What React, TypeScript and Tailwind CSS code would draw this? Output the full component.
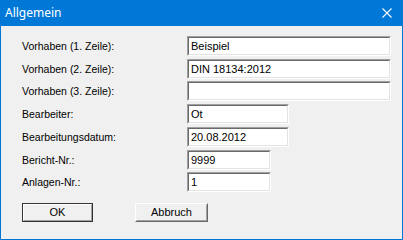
const rows = [
  { label: "Vorhaben (1. Zeile):", value: "Beispiel", width: "w-[204px]", gap: "mt-0" },
  { label: "Vorhaben (2. Zeile):", value: "DIN 18134:2012", width: "w-[204px]", gap: "mt-[3px]" },
  { label: "Vorhaben (3. Zeile):", value: "", width: "w-[204px]", gap: "mt-[2px]" },
  { label: "Bearbeiter:", value: "Ot", width: "w-[102px]", gap: "mt-[3px]" },
  { label: "Bearbeitungsdatum:", value: "20.08.2012", width: "w-[102px]", gap: "mt-[3px]" },
  { label: "Bericht-Nr.:", value: "9999", width: "w-[84px]", gap: "mt-[3px]" },
  { label: "Anlagen-Nr.:", value: "1", width: "w-[84px]", gap: "mt-[2px]" },
];

const uiFont = "font-['Liberation_Sans',Arial,sans-serif]";

function Field({ value, width }: { value: string; width: string }) {
  // klassisches "eingesunkenes" Eingabefeld
  return (
    <div className={`${width} h-[20px] border border-t-[#a0a0a0] border-l-[#a0a0a0] border-b-white border-r-white`}>
      <div className="h-full border border-t-[#696969] border-l-[#696969] border-b-[#e3e3e3] border-r-[#e3e3e3] bg-white flex items-center pl-[2px]">
        <span className={`${uiFont} text-[11px] leading-none text-black`}>{value}</span>
      </div>
    </div>
  );
}

function Button({ label, primary, width }: { label: string; primary?: boolean; width: string }) {
  if (primary) {
    return (
      <div className={`${width} h-[19px] border border-[#333333]`}>
        <div className="h-full border border-t-white border-l-white border-b-[#a0a0a0] border-r-[#a0a0a0] bg-[#f0f0f0] flex items-center justify-center">
          <span className={`${uiFont} text-[11px] leading-none text-black`}>{label}</span>
        </div>
      </div>
    );
  }
  return (
    <div className={`${width} h-[19px] border border-t-white border-l-white border-b-[#696969] border-r-[#696969]`}>
      <div className="h-full border border-t-[#f0f0f0] border-l-[#f0f0f0] border-b-[#a0a0a0] border-r-[#a0a0a0] bg-[#f0f0f0] flex items-center justify-center">
        <span className={`${uiFont} text-[11px] leading-none text-black`}>{label}</span>
      </div>
    </div>
  );
}

export default function App() {
  return (
    <div className="w-[403px] h-[240px] bg-[#0078d7] flex flex-col overflow-hidden">
      {/* Titelleiste */}
      <div className="h-[26px] flex items-center justify-between pl-[5px] pr-[11px] shrink-0">
        <span className="font-['Noto_Sans',sans-serif] text-[12px] leading-none text-white">Allgemein</span>
        <svg width="10" height="10" viewBox="0 0 10 10" fill="none">
          <path d="M0.5 0.5 L9.5 9.5 M9.5 0.5 L0.5 9.5" stroke="white" strokeWidth="1.1" />
        </svg>
      </div>

      <div className="flex-1 mx-[1px] mb-[1px] bg-[#f0f0f0] pt-[10px] pl-[21px]">
        {rows.map((r) => (
          <div key={r.label} className={`flex items-center ${r.gap}`}>
            <span className={`w-[165px] ${uiFont} text-[10.5px] leading-none text-black`}>{r.label}</span>
            <Field value={r.value} width={r.width} />
          </div>
        ))}

        <div className="flex gap-[42px] mt-[11px]">
          <Button label="OK" primary width="w-[71px]" />
          <Button label="Abbruch" width="w-[73px]" />
        </div>
      </div>
    </div>
  );
}
